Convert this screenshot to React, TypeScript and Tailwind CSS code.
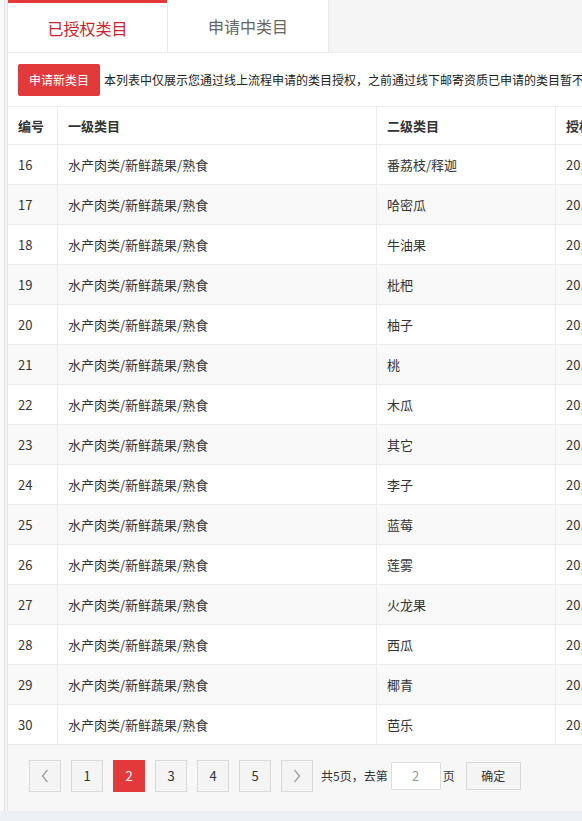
import React from "react";

const rows: [number, string][] = [
  [16, "番荔枝/释迦"],
  [17, "哈密瓜"],
  [18, "牛油果"],
  [19, "枇杷"],
  [20, "柚子"],
  [21, "桃"],
  [22, "木瓜"],
  [23, "其它"],
  [24, "李子"],
  [25, "蓝莓"],
  [26, "莲雾"],
  [27, "火龙果"],
  [28, "西瓜"],
  [29, "椰青"],
  [30, "芭乐"],
];

const font = { fontFamily: '"Noto Sans CJK SC", "Noto Sans", sans-serif' };

function PageBtn({ children, active }: { children: React.ReactNode; active?: boolean }) {
  return (
    <div
      className={
        active
          ? "w-[32px] h-[32px] flex items-center justify-center bg-[#e2393b] text-white text-[13px]"
          : "w-[32px] h-[32px] flex items-center justify-center bg-[#f4f4f4] border border-[#d9d9d9] text-[#333] text-[13px]"
      }
    >
      {children}
    </div>
  );
}

export default function App() {
  return (
    <div className="w-[582px] h-[821px] overflow-hidden flex flex-col bg-[#f7f7f7]" style={font}>
      <div className="flex-1 flex min-h-0">
        <div className="w-[4px] bg-[#fafafa]" />
        <div className="w-[1px] bg-[#e3e3e3]" />
        <div className="w-[2px] bg-[#f2f2f2]" />
        <div className="flex-1 flex flex-col min-w-0 overflow-hidden border-l border-[#e8e8e8]">
          {/* tabs */}
          <div className="h-[53px] flex shrink-0 border-b border-[#ececec]">
            <div className="w-[159px] bg-white border-t-[3px] border-[#e2393b] flex items-center justify-center text-[16px] text-[#c8252c]">
              已授权类目
            </div>
            <div className="w-[162px] bg-white border-l border-r border-[#e8e8e8] flex items-center justify-center text-[16px] text-[#666]">
              申请中类目
            </div>
            <div className="flex-1 bg-[#f5f5f5]" />
          </div>
          {/* toolbar */}
          <div className="h-[54px] shrink-0 bg-white flex items-center pl-[10px] border-b border-[#ececec]">
            <div className="h-[32px] w-[82px] rounded-[2px] bg-[#e2393b] text-white text-[12px] flex items-center justify-center shrink-0">
              申请新类目
            </div>
            <div className="ml-[4px] text-[12px] text-[#222] whitespace-nowrap">
              本列表中仅展示您通过线上流程申请的类目授权，之前通过线下邮寄资质已申请的类目暂不在此展示
            </div>
          </div>
          {/* table */}
          <div className="bg-white">
            <div className="h-[38px] flex items-center border-b border-[#ececec] text-[13px] font-bold text-[#333] whitespace-nowrap">
              <div className="w-[50px] h-full flex items-center pl-[10px] border-r border-[#ececec] shrink-0">编号</div>
              <div className="w-[319px] h-full flex items-center pl-[10px] border-r border-[#ececec] shrink-0">一级类目</div>
              <div className="w-[179px] h-full flex items-center pl-[10px] border-r border-[#ececec] shrink-0">二级类目</div>
              <div className="w-[150px] h-full flex items-center pl-[10px] shrink-0">授权时间</div>
            </div>
            {rows.map(([n, name], i) => (
              <div
                key={n}
                className={
                  (i % 2 === 1 ? "bg-[#f9f9f9] " : "bg-white ") +
                  "h-[40px] flex items-center border-b border-[#ececec] text-[13px] text-[#333] whitespace-nowrap"
                }
              >
                <div className="w-[50px] h-full flex items-center pl-[10px] border-r border-[#ececec] shrink-0">{n}</div>
                <div className="w-[319px] h-full flex items-center pl-[10px] border-r border-[#ececec] shrink-0">水产肉类/新鲜蔬果/熟食</div>
                <div className="w-[179px] h-full flex items-center pl-[10px] border-r border-[#ececec] shrink-0">{name}</div>
                <div className="w-[150px] h-full flex items-center pl-[10px] shrink-0">2017-08-21</div>
              </div>
            ))}
          </div>
          {/* pagination */}
          <div className="flex-1 bg-[#f7f7f7] flex items-start pt-[15px] pl-[21px] gap-[10px] text-[12px] text-[#333] whitespace-nowrap">
            <PageBtn>
              <svg width="10" height="16" viewBox="0 0 10 16" fill="none" stroke="#999" strokeWidth="1.2">
                <path d="M7.5 2 L2.5 8 L7.5 14" />
              </svg>
            </PageBtn>
            <PageBtn>1</PageBtn>
            <PageBtn active>2</PageBtn>
            <PageBtn>3</PageBtn>
            <PageBtn>4</PageBtn>
            <PageBtn>5</PageBtn>
            <PageBtn>
              <svg width="10" height="16" viewBox="0 0 10 16" fill="none" stroke="#999" strokeWidth="1.2">
                <path d="M2.5 2 L7.5 8 L2.5 14" />
              </svg>
            </PageBtn>
            <div className="flex items-center h-[32px] -ml-[2px]">
              <span>共5页，去第</span>
              <div className="ml-[3px] w-[50px] h-[28px] bg-white border border-[#dddddd] flex items-center justify-center text-[#999] text-[13px]">
                2
              </div>
              <span className="ml-[2px]">页</span>
              <div className="ml-[11px] w-[55px] h-[28px] bg-[#f4f4f4] border border-[#d9d9d9] flex items-center justify-center text-[12px]">
                确定
              </div>
            </div>
          </div>
        </div>
      </div>
      <div className="h-[10px] shrink-0 bg-[#edf1f6]" />
    </div>
  );
}
